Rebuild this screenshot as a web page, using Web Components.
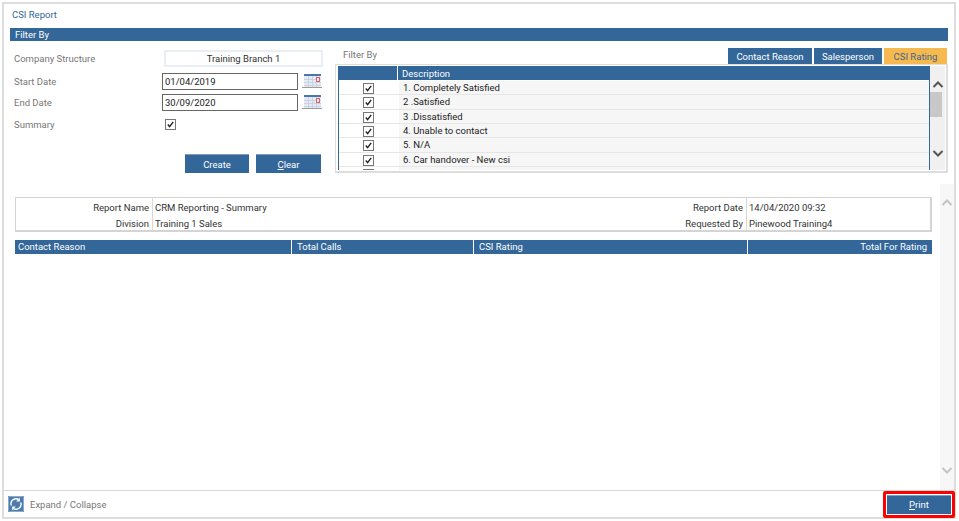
<!DOCTYPE html>
<html lang="en">
<head>
<meta charset="utf-8">
<title>CSI Report</title>
<style>
    html, body { margin: 0; padding: 0; background: #fff; }
    body { font: 9.5px/13px Roboto, "Liberation Sans", sans-serif; color: #333; overflow: hidden; }
</style>
</head>
<body>
<csi-report></csi-report>
<script>
const BLUE = '#336699';

class CheckBox extends HTMLElement {
    constructor() {
        super();
        this.attachShadow({ mode: 'open' });
        this.shadowRoot.innerHTML = `
            <style>
                :host { display: block; width: 9px; height: 9px; border: 1px solid #777; background: #fff; box-sizing: content-box; }
                svg { display: block; }
            </style>
            <svg width="9" height="9" viewBox="0 0 9 9"><path d="M1.8 4.5 L3.6 6.6 L7.2 1.8" fill="none" stroke="#222" stroke-width="1.4"/></svg>
        `;
    }
}

class CalIcon extends HTMLElement {
    constructor() {
        super();
        this.attachShadow({ mode: 'open' });
        this.shadowRoot.innerHTML = `
            <style>:host { display: block; width: 20px; height: 17px; } svg { display: block; }</style>
            <svg width="20" height="17" viewBox="0 0 20 17" shape-rendering="crispEdges">
                <rect x="2" y="1" width="17" height="13" fill="#e6ebf3"/>
                <rect x="2" y="1" width="17" height="2" fill="#4a75ad"/>
                <path d="M2 6.5H19M2 9.5H19M2 12.5H19M6.5 3V14M10.5 3V14M14.5 3V14" stroke="#c9d3e2" fill="none"/>
                <rect x="14" y="4" width="3" height="4" fill="#f4f4f4" stroke="#d9606a"/>
                <rect x="0" y="14" width="20" height="1" fill="#9a9a9a"/>
            </svg>
        `;
    }
}

class BlueButton extends HTMLElement {
    constructor() {
        super();
        this.attachShadow({ mode: 'open' });
        this.shadowRoot.innerHTML = `
            <style>
                :host { display: flex; align-items: center; justify-content: center; background: ${BLUE}; color: #fff; height: 19px; box-sizing: border-box; border-top: 1px solid #7f9dbd; }
            </style>
            <slot></slot>
        `;
    }
}

class ArrowBar extends HTMLElement {
    constructor() {
        super();
        this.attachShadow({ mode: 'open' });
        const colour = this.getAttribute('colour') || '#555';
        this.shadowRoot.innerHTML = `
            <style>
                :host { display: flex; flex-direction: column; justify-content: space-between; align-items: center; box-sizing: border-box; }
                svg { display: block; flex: none; }
                .thumb { flex: none; align-self: stretch; }
                .spacer { flex: 1; }
            </style>
            <svg width="12" height="9" viewBox="0 0 12 9"><path d="M1.5 7 L6 2.5 L10.5 7" fill="none" stroke="${colour}" stroke-width="2"/></svg>
            <div class="thumb"><slot></slot></div>
            <div class="spacer"></div>
            <svg width="12" height="9" viewBox="0 0 12 9"><path d="M1.5 2 L6 6.5 L10.5 2" fill="none" stroke="${colour}" stroke-width="2"/></svg>
        `;
    }
}

class FilterGrid extends HTMLElement {
    constructor() {
        super();
        this.attachShadow({ mode: 'open' });
        const rows = ['1. Completely Satisfied', '2 .Satisfied', '3 .Dissatisfied', '4. Unable to contact', '5. N/A', '6. Car handover - New csi'];
        this.shadowRoot.innerHTML = `
            <style>
                :host { display: grid; grid-template-columns: 1fr 15px; height: 109px; box-sizing: border-box; border: 1px solid #ddd; border-bottom-width: 2px; border-right-width: 2px; padding: 1px 1px 1px 2px; overflow: hidden; }
                .list { border-right: 1px solid ${BLUE}; border-left: 1px solid ${BLUE}; overflow: hidden; }
                .head, .row { display: grid; grid-template-columns: 59px 1fr; }
                .head { height: 14px; background: ${BLUE}; color: #fff; margin: 0 0 1px -1px; }
                .head span { padding-left: 4px; border-left: 1px solid #fff; line-height: 15px; }
                .head i { display: block; }
                .row { height: 14.33px; box-sizing: border-box; border-bottom: 1px solid #e6e6e6; color: #222; line-height: 13px; background: #f6f6f6; }
                .tick { background: #fff; display: flex; justify-content: center; align-items: flex-start; padding-top: 2px; }
                .text { padding-left: 4px; border-left: 1px solid #fff; }
                check-box { flex: none; }
                arrow-bar { background: #f0f0f0; padding: 14px 0 12px; }
                .thumb { width: 12px; height: 25px; margin-top: 3px; background: #c8c8c8; }
            </style>
            <div class="list">
                <div class="head"><i></i><span>Description</span></div>
                ${rows.map(r => `<div class="row"><div class="tick"><check-box></check-box></div><div class="text">${r}</div></div>`).join('')}
                <div class="row"><div class="tick"><check-box></check-box></div><div class="text"></div></div>
            </div>
            <arrow-bar><div class="thumb"></div></arrow-bar>
        `;
    }
}

class FilterPanel extends HTMLElement {
    constructor() {
        super();
        this.attachShadow({ mode: 'open' });
        this.shadowRoot.innerHTML = `
            <style>
                :host { display: block; height: 145px; }
                .bar { background: ${BLUE}; color: #fff; height: 13px; line-height: 14px; padding-left: 5px; }
                .body { display: grid; grid-template-columns: 325px 1fr; }
                .left { padding: 9px 0 0 4px; }
                .line { display: grid; grid-template-columns: 148px auto; align-items: center; color: #777; }
                .company { height: 17px; }
                .value { margin-left: 2px; width: 159px; height: 17px; box-sizing: border-box; border: 2px solid #e9eef4; text-align: center; color: #333; line-height: 14px; }
                .date { margin-top: 6px; height: 17px; }
                .date + .date { margin-top: 4px; }
                .field { display: flex; gap: 4px; }
                .input { width: 136px; height: 17px; box-sizing: border-box; border: 1px solid #666; padding-left: 2px; color: #222; line-height: 15px; }
                .summary { margin-top: 8px; height: 11px; }
                .summary span { line-height: 11px; }
                .summary check-box { margin-left: 3px; }
                .buttons { display: flex; gap: 7px; margin: 24px 0 0 171px; }
                .create { width: 64px; }
                .clear { width: 65px; }
                u { text-decoration: underline; }
                .right { min-width: 0; }
                .top { display: flex; justify-content: space-between; height: 23px; padding: 7px 1px 0 8px; box-sizing: border-box; }
                .top .caption { color: #777; line-height: 13px; }
                .tabs { display: flex; gap: 2px; height: 16px; }
                .tab { background: ${BLUE}; color: #fff; line-height: 17px; text-align: center; }
                .tab.on { background: #f6b94f; color: #3d6591; }
            </style>
            <div class="bar">Filter By</div>
            <div class="body">
                <div class="left">
                    <div class="line company"><span>Company Structure</span><div class="value">Training Branch 1</div></div>
                    <div class="line date"><span>Start Date</span><div class="field"><div class="input">01/04/2019</div><cal-icon></cal-icon></div></div>
                    <div class="line date"><span>End Date</span><div class="field"><div class="input">30/09/2020</div><cal-icon></cal-icon></div></div>
                    <div class="line summary"><span>Summary</span><check-box></check-box></div>
                    <div class="buttons">
                        <blue-button class="create">Create</blue-button>
                        <blue-button class="clear"><span><u>C</u>lear</span></blue-button>
                    </div>
                </div>
                <div class="right">
                    <div class="top">
                        <span class="caption">Filter By</span>
                        <div class="tabs">
                            <div class="tab" style="width:84px">Contact Reason</div>
                            <div class="tab" style="width:68px">Salesperson</div>
                            <div class="tab on" style="width:63px">CSI Rating</div>
                        </div>
                    </div>
                    <filter-grid></filter-grid>
                </div>
            </div>
        `;
    }
}

class ReportSummary extends HTMLElement {
    constructor() {
        super();
        this.attachShadow({ mode: 'open' });
        this.shadowRoot.innerHTML = `
            <style>
                :host { display: grid; grid-template-columns: 137px 1fr 137px 183px; grid-auto-rows: 16px; height: 35px; box-sizing: border-box; border: 1px solid #d4d4d4; border-width: 1px 2px 2px 1px; color: #333; line-height: 19px; }
                .k { text-align: right; padding-right: 3px; border-right: 1px solid #d8d8d8; }
                .v { padding-left: 2px; }
            </style>
            <div class="k">Report Name</div><div class="v">CRM Reporting - Summary</div>
            <div class="k">Report Date</div><div class="v">14/04/2020 09:32</div>
            <div class="k">Division</div><div class="v">Training 1 Sales</div>
            <div class="k">Requested By</div><div class="v">Pinewood Training4</div>
        `;
    }
}

class ReportHeader extends HTMLElement {
    constructor() {
        super();
        this.attachShadow({ mode: 'open' });
        this.shadowRoot.innerHTML = `
            <style>
                :host { display: grid; grid-template-columns: 277px 182px 274px 1fr; height: 14px; background: ${BLUE}; color: #fff; line-height: 14px; box-sizing: border-box; }
                div { padding-left: 5px; border-right: 1px solid #fff; }
                div:nth-child(2) { padding-left: 3px; }
                div:last-child { border-right: 0; text-align: right; padding: 0 5px 0 0; }
            </style>
            <div>Contact Reason</div><div>Total Calls</div><div>CSI Rating</div><div>Total For Rating</div>
        `;
    }
}

class FooterBar extends HTMLElement {
    constructor() {
        super();
        this.attachShadow({ mode: 'open' });
        this.shadowRoot.innerHTML = `
            <style>
                :host { display: flex; justify-content: space-between; align-items: center; height: 27px; border-top: 1px solid #d8d8d8; padding: 0 3px 0 4px; box-sizing: border-box; color: #777; }
                .expand { display: flex; align-items: center; gap: 6px; }
                svg { display: block; }
                .print { position: relative; width: 64px; height: 19px; }
                /* red callout drawn over the button */
                .print::after { content: ""; position: absolute; inset: -4px; border: 3px solid #f00; border-radius: 2px; pointer-events: none; }
                u { text-decoration: underline; }
            </style>
            <div class="expand">
                <svg width="16" height="16" viewBox="0 0 16 16">
                    <rect width="16" height="16" rx="1" fill="#4f7cae"/>
                    <rect x="0.5" y="0.5" width="15" height="15" rx="1" fill="none" stroke="#8ba9c9"/>
                    <path d="M3.3 9.5 A5 5 0 0 1 11 3.8" fill="none" stroke="#fff" stroke-width="1.4"/>
                    <path d="M12.7 6.5 A5 5 0 0 1 5 12.2" fill="none" stroke="#fff" stroke-width="1.4"/>
                    <path d="M11.8 1.6 V5.4 H8.2 Z" fill="#fff"/>
                    <path d="M4.2 14.4 V10.6 H7.8 Z" fill="#fff"/>
                </svg>
                <span>Expand / Collapse</span>
            </div>
            <div class="print"><blue-button><span><u>P</u>rint</span></blue-button></div>
        `;
    }
}

class CsiReport extends HTMLElement {
    constructor() {
        super();
        this.attachShadow({ mode: 'open' });
        this.shadowRoot.innerHTML = `
            <style>
                :host { display: block; width: 959px; height: 521px; box-sizing: border-box; padding: 2px 3px 2px 2px; }
                .frame { height: 517px; box-sizing: border-box; border: 2px solid #ddd; display: flex; flex-direction: column; }
                .title { height: 24px; padding: 4px 0 0 8px; box-sizing: border-box; color: ${BLUE}; line-height: 14px; }
                .filter { margin: 0 6px; }
                .report { flex: 1; display: grid; grid-template-columns: 1fr 14px; margin-top: 11px; min-height: 0; }
                .sheet { padding: 13px 8px 0 11px; }
                report-header { margin-top: 8px; }
                .scroll { background: #f7f7f7; padding: 14px 0 15px; }
            </style>
            <div class="frame">
                <div class="title">CSI Report</div>
                <filter-panel class="filter"></filter-panel>
                <div class="report">
                    <div class="sheet">
                        <report-summary></report-summary>
                        <report-header></report-header>
                    </div>
                    <arrow-bar class="scroll" colour="#c4c4c4"></arrow-bar>
                </div>
                <footer-bar></footer-bar>
            </div>
        `;
    }
}

customElements.define('check-box', CheckBox);
customElements.define('cal-icon', CalIcon);
customElements.define('blue-button', BlueButton);
customElements.define('arrow-bar', ArrowBar);
customElements.define('filter-grid', FilterGrid);
customElements.define('filter-panel', FilterPanel);
customElements.define('report-summary', ReportSummary);
customElements.define('report-header', ReportHeader);
customElements.define('footer-bar', FooterBar);
customElements.define('csi-report', CsiReport);
</script>
</body>
</html>
